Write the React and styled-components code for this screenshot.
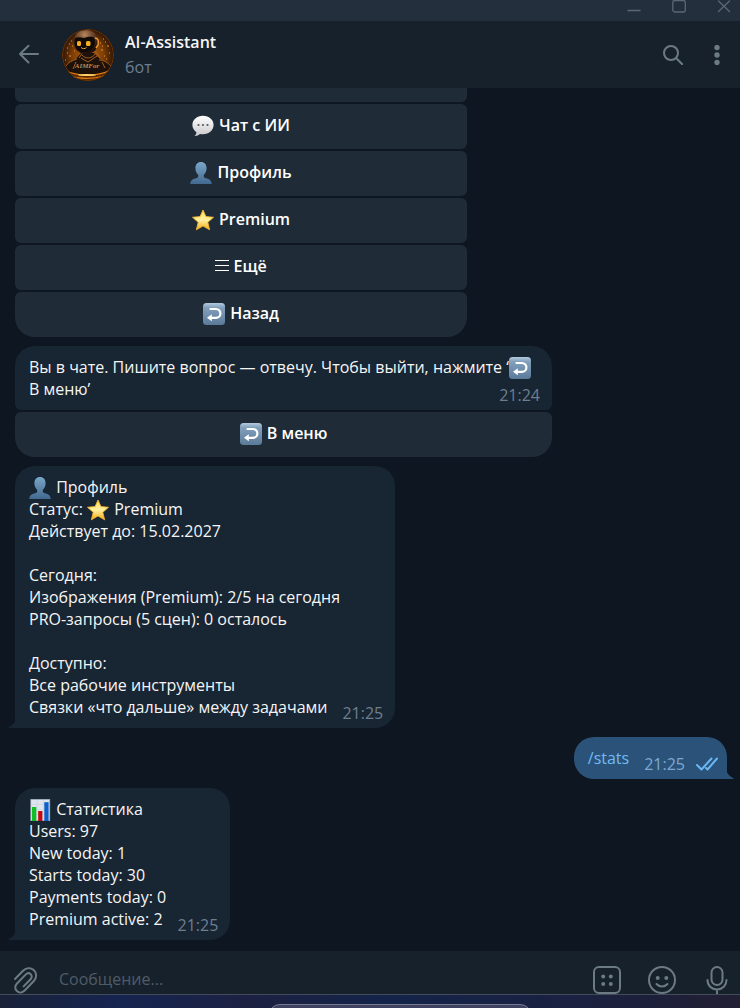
import styled, { createGlobalStyle } from "styled-components";

const ICON_COLOR = "#6c7a83";

// эмодзи
const SpeechEmoji = () => (
  <Emoji viewBox="0 0 22 22" aria-hidden="true">
    <defs>
      <linearGradient id="speech" x1="0" y1="0" x2="0" y2="1">
        <stop offset="0" stopColor="#ffffff" />
        <stop offset="1" stopColor="#c9c9cc" />
      </linearGradient>
    </defs>
    <path
      d="M11 .8C5 .8.4 4.9.4 10c0 3 1.6 5.600 4 7.200-.1 1.700-.8 3-2 3.900 2.200-.1 4.100-.9 5.400-2.200 1 .2 2.100.3 3.200.3 6 0 10.600-4.100 10.600-9.200S17 .8 11 .8z"
      fill="url(#speech)"
    />
    <circle cx="6.500" cy="10" r="1.100" fill="#55565a" />
    <circle cx="11" cy="10" r="1.100" fill="#55565a" />
    <circle cx="15.500" cy="10" r="1.100" fill="#55565a" />
  </Emoji>
);

const PersonEmoji = () => (
  <Emoji viewBox="0 0 22 22" aria-hidden="true">
    <defs>
      <linearGradient id="person" x1="0" y1="0" x2="0" y2="1">
        <stop offset="0" stopColor="#7aa7c9" />
        <stop offset="1" stopColor="#42698f" />
      </linearGradient>
    </defs>
    <path
      d="M11 0c3.500 0 5.600 2.500 5.600 6.200 0 2.700-1.200 5.300-2.800 6.600v1.700c0 .9.5 1.300 1.500 1.600 3.700 1 6 2 6.500 5.900H.2c.5-3.900 2.800-4.900 6.500-5.900 1-.3 1.500-.7 1.500-1.600v-1.700C6.600 11.500 5.400 8.900 5.400 6.200 5.400 2.500 7.500 0 11 0z"
      fill="url(#person)"
    />
  </Emoji>
);

const StarEmoji = () => (
  <Emoji viewBox="0 0 22 22" aria-hidden="true">
    <defs>
      <linearGradient id="star" x1="0" y1="0" x2="0" y2="1">
        <stop offset="0" stopColor="#ffe15c" />
        <stop offset=".5" stopColor="#fff0a0" />
        <stop offset="1" stopColor="#f5ac18" />
      </linearGradient>
    </defs>
    <path
      d="M11 1l2.900 6.600 7.600.7-5.700 5 1.800 7.500L11 16.900l-6.600 3.900 1.800-7.500L.5 8.300l7.600-.7z"
      fill="url(#star)"
      stroke="#f5b62b"
      strokeWidth=".9"
      strokeLinejoin="round"
    />
  </Emoji>
);

const BackEmoji = () => (
  <Emoji viewBox="0 0 22 22" aria-hidden="true">
    <defs>
      <linearGradient id="back" x1="0" y1="0" x2="0" y2="1">
        <stop offset="0" stopColor="#b4cbdf" />
        <stop offset=".2" stopColor="#83a1bd" />
        <stop offset="1" stopColor="#5b7a99" />
      </linearGradient>
    </defs>
    <rect width="22" height="22" rx="3.500" fill="url(#back)" />
    <path
      d="M7.500 6H13a4.400 4.400 0 0 1 0 8.800H8"
      fill="none"
      stroke="#fff"
      strokeWidth="2.200"
      strokeLinecap="round"
    />
    <path d="M4 14.800l4.800-3.500v7z" fill="#fff" />
  </Emoji>
);

const ChartEmoji = () => (
  <Emoji viewBox="0 0 22 22" aria-hidden="true">
    <rect x="1.800" y=".3" width="19" height="21.500" fill="#dfe5ef" stroke="#9aa6b4" strokeWidth=".7" />
    <path d="M2 5.500h18.500M2 10.500h18.500M2 15.500h18.500M8 .5v21M14.500.5v21" stroke="#c3ccda" strokeWidth=".5" />
    <rect x="3" y="8" width="4.300" height="14" fill="#12bd25" />
    <rect x="9.200" y="12" width="4.200" height="10" fill="#c4080f" />
    <rect x="15.300" y="3.200" width="4.300" height="18.800" fill="#0d5fc9" />
  </Emoji>
);

const BotAvatar = () => (
  <Avatar viewBox="0 0 52 52" role="img" aria-label="AI-Assistant">
    <defs>
      <radialGradient id="glow">
        <stop offset="0" stopColor="#b86510" />
        <stop offset=".6" stopColor="#7d3e08" />
        <stop offset="1" stopColor="#2c1404" />
      </radialGradient>
      <radialGradient id="helmet" cx=".45" cy=".2" r=".7">
        <stop offset="0" stopColor="#b58560" />
        <stop offset=".5" stopColor="#6a4227" />
        <stop offset="1" stopColor="#21110a" />
      </radialGradient>
      <clipPath id="round">
        <circle cx="26" cy="26" r="26" />
      </clipPath>
    </defs>
    <g clipPath="url(#round)">
      <rect width="52" height="52" fill="url(#glow)" />
      <path
        d="M5 19h1M9 12h1M7 27h2M12 22h1M3 31h1M41 10h1M45 17h2M39 21h2M47 24h1M42 27h1M10 17h1M38 14h1M44 30h1M7 15h1M43 13h1M40 17h1M5 24h1"
        stroke="#f0931d"
        strokeWidth="1.200"
      />
      <path d="M1 41c2-7 7-8 13-11l5-6h13l7 7c6 1 10 4 12 10v8H1z" fill="#1d110b" />
      <path
        d="M4 37c2-4 6-5 11-7M20 26c3 4 10 4 13-1M19 29l7 4 9-6M37 31c5 0 9 3 12 6M14 33l-3 7M40 33l3 6M21 23l-4 6M33 22l5 7"
        fill="none"
        stroke="#a5601f"
        strokeWidth="1"
      />
      <path d="M12 14C11 5 17 1 24 1s12 4 12 12c0 7-4 12-12 12-7 0-12-5-12-11z" fill="url(#helmet)" />
      <path d="M13 9c3-1 6-1 9 0 4-1 8-2 10 0 3 6-1 14-10 14-7 0-11-7-9-14z" fill="#0f0907" />
      <rect x="15" y="12" width="4" height="5" rx="1.500" fill="#f8ae1c" />
      <rect x="24" y="12" width="4.500" height="5" rx="1.500" fill="#f8ae1c" />
      <path d="M19 18.500c1.500 1.500 4 1.500 5.500 0" fill="none" stroke="#e9a73e" strokeWidth="1" />
      <path d="M33 9c3 0 4 3 3 7l-2 3" fill="none" stroke="#f09a2c" strokeWidth="1.500" />
      <AvatarCaption x="25" y="39" textAnchor="middle">
        AIMFor
      </AvatarCaption>
      <path d="M0 40c8 5 18 6 26 6s18-1 26-7v14H0z" fill="#5a2904" />
      <path d="M3 42c14 5 31 6 46-1M10 48c11 2 22 2 32-1" fill="none" stroke="#e27d12" strokeWidth="1.300" />
      <ellipse cx="25" cy="46" rx="9" ry="1" fill="#ffd36a" />
      <circle cx="26" cy="26" r="25.500" fill="none" stroke="#6d370a" />
    </g>
  </Avatar>
);

// хвостик у последнего сообщения
const LeftTail = () => (
  <Tail $side="left" viewBox="0 0 8 12" aria-hidden="true">
    <path d="M8 0c0 6-3 9-7.500 11.200-.5.300-.3.800.2.800H8z" fill="currentColor" />
  </Tail>
);

const RightTail = () => (
  <Tail $side="right" viewBox="0 0 8 12" aria-hidden="true">
    <path d="M0 0c0 6 3 9 7.500 11.200.5.300.3.800-.2.800H0z" fill="currentColor" />
  </Tail>
);

const MenuSign = () => (
  <Sign viewBox="0 0 14 14" aria-hidden="true">
    <path d="M0 1.500h14M0 6.500h14M0 11.500h14" stroke="currentColor" />
  </Sign>
);

const menuItems = [
  { emoji: null, label: "Меню" },
  { emoji: <SpeechEmoji />, label: "Чат с ИИ" },
  { emoji: <PersonEmoji />, label: "Профиль" },
  { emoji: <StarEmoji />, label: "Premium" },
  { emoji: <MenuSign />, label: "Ещё" },
  { emoji: <BackEmoji />, label: "Назад" },
];

const App = () => {
  return (
    <>
      <GlobalStyle />
      <Window>
        <TitleBar>
          <WindowButton aria-label="Свернуть">
            <Icon $size={14} viewBox="0 0 14 14">
              <path d="M1 10.500h12" />
            </Icon>
          </WindowButton>
          <WindowButton aria-label="Развернуть">
            <Icon $size={14} viewBox="0 0 14 14">
              <rect x=".8" y=".5" width="12.500" height="11.500" rx="2" />
            </Icon>
          </WindowButton>
          <WindowButton aria-label="Закрыть">
            <Icon $size={14} viewBox="0 0 14 14">
              <path d="M1.500 1l11 10.500M12.500 1l-11 10.500" />
            </Icon>
          </WindowButton>
        </TitleBar>

        <Header>
          <IconButton aria-label="Назад">
            <Icon $size={20} viewBox="0 0 20 20">
              <path d="M19 9H1M9.500.8L1 9l8.500 8.500" />
            </Icon>
          </IconButton>
          <BotAvatar />
          <BotInfo>
            <BotName>AI-Assistant</BotName>
            <BotStatus>бот</BotStatus>
          </BotInfo>
          <HeaderActions>
            <IconButton aria-label="Поиск">
              <Icon $size={20} viewBox="0 0 20 20">
                <circle cx="8" cy="8" r="7" />
                <path d="M13 13l6.500 6.500" />
              </Icon>
            </IconButton>
            <IconButton aria-label="Ещё">
              <Icon $size={20} viewBox="0 0 20 20" $filled>
                <circle cx="10" cy="2.500" r="2.700" />
                <circle cx="10" cy="10" r="2.700" />
                <circle cx="10" cy="17.500" r="2.700" />
              </Icon>
            </IconButton>
          </HeaderActions>
        </Header>

        <Chat>
          <Keyboard $width={452}>
            {menuItems.map((item) => (
              <KeyboardButton key={item.label}>
                {item.emoji} {item.label}
              </KeyboardButton>
            ))}
          </Keyboard>

          <Keyboard $width={537}>
            <Bubble $withKeyboard>
              Вы в чате. Пишите вопрос — отвечу. Чтобы выйти, нажмите ‘<BackEmoji /> В&nbsp;меню’
              <Time $right>21:24</Time>
            </Bubble>
            <KeyboardButton>
              <BackEmoji /> В меню
            </KeyboardButton>
          </Keyboard>

          <Bubble>
            <PersonEmoji /> Профиль
            <br />
            Статус: <StarEmoji /> Premium
            <br />
            Действует до: 15.02.2027
            <br />
            <br />
            Сегодня:
            <br />
            Изображения (Premium): 2/5 на сегодня
            <br />
            PRO-запросы (5 сцен): 0 осталось
            <br />
            <br />
            Доступно:
            <br />
            Все рабочие инструменты
            <br />
            Связки «что дальше» между задачами
            <Time>21:25</Time>
            <LeftTail />
          </Bubble>

          <Bubble $own>
            <Command href="#stats">/stats</Command>
            <Time $own>
              21:25
              <Checks viewBox="0 0 22 14" aria-label="Прочитано">
                <path d="M1 8l4.500 4.500L15.500 1.500M10 11l1.500 1.500L21 1.500" />
              </Checks>
            </Time>
            <RightTail />
          </Bubble>

          <Bubble>
            <ChartEmoji /> Статистика
            <br />
            Users: 97
            <br />
            New today: 1
            <br />
            Starts today: 30
            <br />
            Payments today: 0
            <br />
            Premium active: 2<Time>21:25</Time>
            <LeftTail />
          </Bubble>
        </Chat>

        <Composer>
          <IconButton aria-label="Прикрепить файл">
            <Icon $size={28} viewBox="0 0 28 28">
              <path d="M4 13l7.500-7.800c3.500-3.600 7.900-4 11.200-1.100s3.300 7.700-.1 11.200l-8.900 9.200c-2.400 2.400-5.600 2.600-7.800.6s-2.200-5.200.1-7.600l8.600-8.900c1.600-1.600 3.700-1.700 5.100-.4s1.400 3.400-.1 5l-7 7.200" />
            </Icon>
          </IconButton>
          <MessageInput aria-label="Сообщение" placeholder="Сообщение..." />
          <ComposerActions>
            <IconButton aria-label="Команды бота">
              <Icon $size={28} viewBox="0 0 28 28">
                <rect x="1" y="1" width="26" height="26" rx="5" />
                <g fill="currentColor" stroke="none">
                  <circle cx="10.200" cy="10.500" r="2" />
                  <circle cx="17.800" cy="10.500" r="2" />
                  <circle cx="10.200" cy="18" r="2" />
                  <circle cx="17.800" cy="18" r="2" />
                </g>
              </Icon>
            </IconButton>
            <IconButton aria-label="Эмодзи">
              <Icon $size={28} viewBox="0 0 28 28">
                <circle cx="14" cy="14" r="13" />
                <path d="M8.500 18c2.800 3.200 8.200 3.200 11 0" />
                <g fill="currentColor" stroke="none">
                  <circle cx="9.700" cy="12" r="2" />
                  <circle cx="18.300" cy="12" r="2" />
                </g>
              </Icon>
            </IconButton>
            <IconButton aria-label="Голосовое сообщение">
              <Icon $size={28} viewBox="0 0 28 28">
                <rect x="8.500" y="1" width="11" height="18" rx="5.500" />
                <path d="M4.500 14c0 5.500 4 9.500 9.500 9.500s9.500-4 9.500-9.500M14 23.500V28" />
              </Icon>
            </IconButton>
          </ComposerActions>
        </Composer>

        <Desktop>
          <Dock />
        </Desktop>
      </Window>
    </>
  );
};

export default App;

const GlobalStyle = createGlobalStyle`
  * {
    box-sizing: border-box;
  }

  body {
    margin: 0;
    background: #0e1621;
  }

  button, input {
    font: inherit;
  }
`;

const Window = styled.div`
  display: flex;
  flex-direction: column;
  height: 100vh;
  overflow: hidden;

  font-family: "Open Sans", "Noto Sans", sans-serif;
  font-size: 16px;
  line-height: 22px;
  color: #f5f5f5;
`;

// верхняя полоса окна
const TitleBar = styled.div`
  display: flex;
  flex-shrink: 0;
  justify-content: flex-end;
  align-items: flex-start;
  gap: 31px;

  height: 21px;
  padding-right: 9px;
  background: #242f3d;
`;

const WindowButton = styled.button`
  display: flex;
  padding: 0;
  border: 0;
  background: none;
  color: #5b6874;
`;

const Icon = styled.svg`
  display: block;
  width: ${({ $size }) => $size}px;
  height: ${({ $size }) => $size}px;

  fill: ${({ $filled }) => ($filled ? "currentColor" : "none")};
  stroke: ${({ $filled }) => ($filled ? "none" : "currentColor")};
  stroke-width: ${({ $size }) => ($size > 14 ? 2 : 1.3)};
  stroke-linecap: round;
  stroke-linejoin: round;
`;

const IconButton = styled.button`
  display: flex;
  flex-shrink: 0;
  padding: 0;
  border: 0;
  background: none;
  color: ${ICON_COLOR};
`;

const Header = styled.header`
  display: flex;
  flex-shrink: 0;
  align-items: center;
  z-index: 1;

  height: 67px;
  padding: 0 13px 0 19px;
  background: #17212b;
`;

const Avatar = styled.svg`
  flex-shrink: 0;
  width: 52px;
  height: 52px;
  margin: 0 11px 0 23px;
`;

const AvatarCaption = styled.text`
  font-family: "Liberation Serif", serif;
  font-size: 7px;
  font-style: italic;
  font-weight: bold;
  fill: #b98a58;
`;

const BotInfo = styled.div`
  display: flex;
  flex-direction: column;
  gap: 3px;
`;

const BotName = styled.span`
  font-weight: 600;
`;

const BotStatus = styled.span`
  color: #6d7f8f;
`;

const HeaderActions = styled.div`
  display: flex;
  gap: 24px;
  margin-left: auto;
`;

const Chat = styled.main`
  display: flex;
  flex: 1;
  flex-direction: column;
  justify-content: flex-end;
  align-items: flex-start;
  gap: 9px;

  min-height: 0;
  padding: 0 13px 11px 15px;
  background: #0e1621;
`;

// сообщение вместе с кнопками под ним
const Keyboard = styled.div`
  display: flex;
  flex-direction: column;
  gap: 2px;

  width: ${({ $width }) => $width}px;
  max-width: 100%;
`;

const KeyboardButton = styled.button`
  height: 45px;
  padding: 0 0 4px;
  border: 0;
  border-radius: 6px;
  background: #1f2c38;

  font-weight: 600;
  color: #ffffff;

  &:last-child {
    border-radius: 6px 6px 20px 20px;
  }
`;

const Bubble = styled.div`
  position: relative;
  align-self: ${({ $own, $withKeyboard }) => ($own ? "flex-end" : $withKeyboard ? "stretch" : "flex-start")};

  max-width: 100%;
  padding: 10px ${({ $own }) => ($own ? 9 : 12)}px 10px 14px;
  border-radius: ${({ $own, $withKeyboard }) =>
    $withKeyboard ? "20px 20px 6px 6px" : $own ? "20px 20px 0 20px" : "20px 20px 20px 0"};
  background: ${({ $own }) => ($own ? "#2b5278" : "#182533")};
`;

// время чуть ниже последней строки
const Time = styled.span`
  display: inline-flex;
  align-items: center;
  gap: 11px;
  float: ${({ $right }) => ($right ? "right" : "none")};

  margin: ${({ $right }) => ($right ? 6 : 0)}px 0 -6px 15px;
  vertical-align: -6px;
  color: ${({ $own }) => ($own ? "#7da8d3" : "#6d7f8f")};
`;

const Command = styled.a`
  color: #70baf5;
  text-decoration: none;
`;

const Checks = styled.svg`
  width: 22px;
  height: 14px;
  fill: none;
  stroke: #6ab7f4;
  stroke-width: 2;
  stroke-linecap: round;
  stroke-linejoin: round;
`;

const Tail = styled.svg`
  position: absolute;
  bottom: 0;
  ${({ $side }) => $side}: -7px;

  width: 8px;
  height: 12px;
  color: ${({ $side }) => ($side === "left" ? "#182533" : "#2b5278")};
`;

const Emoji = styled.svg`
  width: 22px;
  height: 22px;
  margin: -3px 1px -3px 0;
  vertical-align: -3px;
`;

const Sign = styled.svg`
  width: 14px;
  height: 14px;
  vertical-align: -1px;
`;

// поле ввода
const Composer = styled.footer`
  display: flex;
  flex-shrink: 0;
  align-items: flex-start;
  overflow: hidden;

  height: 43px;
  padding: 15px 9px 0 11px;
  background: #17212b;
`;

const MessageInput = styled.input`
  flex: 1;
  min-width: 0;
  height: 28px;
  margin: 0 20px;
  padding: 0 0 2px;
  border: 0;
  outline: 0;
  background: none;
  color: #f5f5f5;

  &::placeholder {
    color: #4f5c68;
    opacity: 1;
  }
`;

const ComposerActions = styled.div`
  display: flex;
  gap: 27px;
`;

const Desktop = styled.div`
  display: flex;
  flex-shrink: 0;
  justify-content: center;
  overflow: hidden;

  height: 14px;
  padding: 9px 60px 0 120px;
  border-top: 1px solid #434b5b;
  background: linear-gradient(90deg, #1a2238, #152450 16%, #1c2142 34%, #132349 52%, #1a2142 76%, #211f33);
`;

const Dock = styled.div`
  width: 264px;
  height: 24px;
  border: 1px solid #777a91;
  border-radius: 12px;
  background: #3e4260;
`;
